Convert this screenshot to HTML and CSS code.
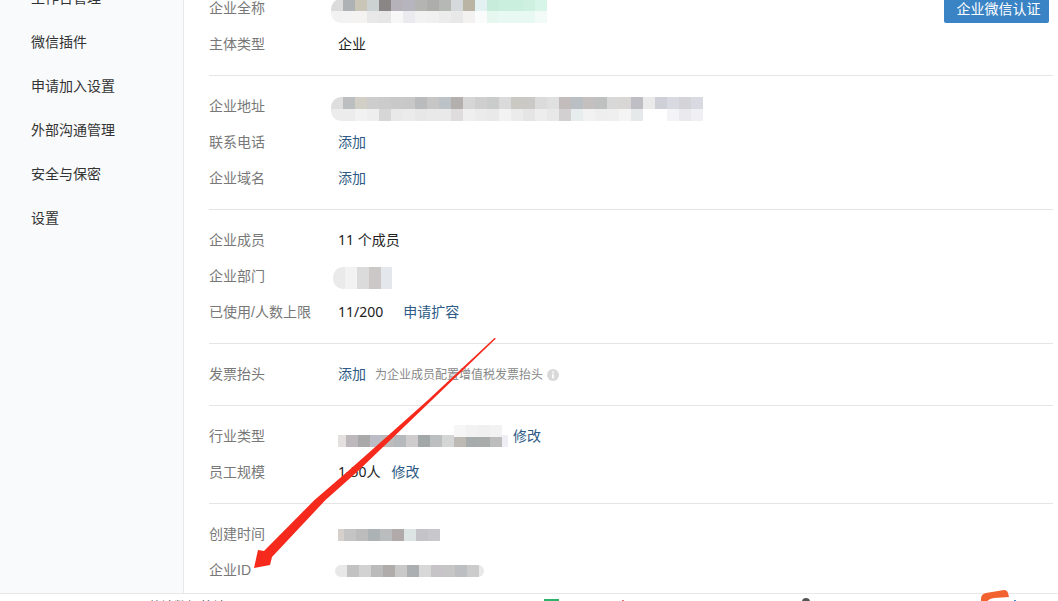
FILE: index.html
```html
<!DOCTYPE html>
<html lang="zh-CN">
<head>
<meta charset="utf-8">
<title>企业信息</title>
<link rel="stylesheet" href="styles.css">
</head>
<body>
<div class="page">
  <div class="app">
    <nav class="sidebar">
      <a class="nav-item">工作台管理</a>
      <a class="nav-item">微信插件</a>
      <a class="nav-item">申请加入设置</a>
      <a class="nav-item">外部沟通管理</a>
      <a class="nav-item">安全与保密</a>
      <a class="nav-item">设置</a>
    </nav>
    <main class="main">
      <section class="section section-head">
        <div class="rows">
          <div class="row"><span class="label">企业全称</span>
            <svg class="mosaic m-name" viewBox="0 0 216 24" width="216" height="24">
              <rect x="0" y="0" fill="#dcdcdc"/><rect x="12" y="0" fill="#aeb2b4"/><rect x="24" y="0" fill="#c9c6b8"/><rect x="36" y="0" fill="#ccd2d2"/><rect x="48" y="0" fill="#8a8686"/><rect x="60" y="0" fill="#b5b2ba"/><rect x="72" y="0" fill="#b6b4bd"/><rect x="84" y="0" fill="#b4b5b2"/><rect x="96" y="0" fill="#adaeac"/><rect x="108" y="0" fill="#b6b8b6"/><rect x="120" y="0" fill="#d6d9dc"/><rect x="132" y="0" fill="#b9b4a4"/><rect x="144" y="0" fill="#e4f1f2"/><rect x="156" y="0" fill="#c8ecdc"/><rect x="168" y="0" fill="#cbefde"/><rect x="180" y="0" fill="#cbefde"/><rect x="192" y="0" fill="#cdf0e0"/><rect x="204" y="0" fill="#d8f5ea"/>
              <rect x="0" y="12" fill="#f2f2f2"/><rect x="12" y="12" fill="#f3f3f3"/><rect x="24" y="12" fill="#f4f3f2"/><rect x="36" y="12" fill="#e8e8e8"/><rect x="48" y="12" fill="#e6e6e6"/><rect x="60" y="12" fill="#f7f7f7"/><rect x="72" y="12" fill="#ebebef"/><rect x="84" y="12" fill="#f2f2f2"/><rect x="96" y="12" fill="#f0f0f0"/><rect x="108" y="12" fill="#ececec"/><rect x="120" y="12" fill="#e8e8e8"/><rect x="132" y="12" fill="#f4f2f0"/><rect x="144" y="12" fill="#fafcfc"/><rect x="156" y="12" fill="#e6f7f0"/><rect x="168" y="12" fill="#e8f8f2"/><rect x="180" y="12" fill="#e8f8f2"/><rect x="192" y="12" fill="#e8f8f2"/><rect x="204" y="12" fill="#f2fbf8"/>
            </svg>
          </div>
          <div class="row"><span class="label">主体类型</span><span class="value">企业</span></div>
        </div>
        <button class="verify" type="button">企业微信认证</button>
      </section>

      <section class="section">
        <div class="row"><span class="label">企业地址</span>
          <svg class="mosaic m-addr" viewBox="0 0 373 24" width="373" height="24">
            <rect x="0" y="0" fill="#dedede"/><rect x="12" y="0" fill="#bcbfc0"/><rect x="24" y="0" fill="#d2cfc6"/><rect x="36" y="0" fill="#cdcdcd"/><rect x="48" y="0" fill="#cbcbcb"/><rect x="60" y="0" fill="#c9c9c9"/><rect x="72" y="0" fill="#c8c8c8"/><rect x="84" y="0" fill="#b9bbbc"/><rect x="96" y="0" fill="#c6c6c6"/><rect x="108" y="0" fill="#bcc2c6"/><rect x="120" y="0" fill="#b3afac"/><rect x="132" y="0" fill="#d6d6d6"/><rect x="144" y="0" fill="#cfcfcf"/><rect x="156" y="0" fill="#c9ccca"/><rect x="168" y="0" fill="#dadada"/><rect x="180" y="0" fill="#cbc9c4"/><rect x="192" y="0" fill="#cbc9c6"/><rect x="204" y="0" fill="#dbdbdb"/><rect x="216" y="0" fill="#e0e0e0"/><rect x="228" y="0" fill="#c2bcbc"/><rect x="240" y="0" fill="#b9bfc2"/><rect x="252" y="0" fill="#c3c0bf"/><rect x="264" y="0" fill="#bfc0c0"/><rect x="276" y="0" fill="#d8d8d8"/><rect x="288" y="0" fill="#d9d6d6"/><rect x="300" y="0" fill="#bebec4"/><rect x="312" y="0" fill="#eaeaea"/><rect x="324" y="0" fill="#cfcfd8"/><rect x="336" y="0" fill="#d9d9e2"/><rect x="348" y="0" fill="#d4d4d8"/><rect x="360" y="0" fill="#d9d9e2"/>
            <rect x="0" y="12" fill="#ececec"/><rect x="12" y="12" fill="#ececec"/><rect x="24" y="12" fill="#f2f2f2"/><rect x="36" y="12" fill="#eeeeee"/><rect x="48" y="12" fill="#d6d6d6"/><rect x="60" y="12" fill="#e9e9e9"/><rect x="72" y="12" fill="#ebebeb"/><rect x="84" y="12" fill="#e7e7e7"/><rect x="96" y="12" fill="#e9e9e9"/><rect x="108" y="12" fill="#e9e9e9"/><rect x="120" y="12" fill="#dedcdc"/><rect x="132" y="12" fill="#efefef"/><rect x="144" y="12" fill="#ebebeb"/><rect x="156" y="12" fill="#e9e9e9"/><rect x="168" y="12" fill="#f2f2f2"/><rect x="180" y="12" fill="#ebebeb"/><rect x="192" y="12" fill="#e5e5e5"/><rect x="204" y="12" fill="#ededed"/><rect x="216" y="12" fill="#e8e8e8"/><rect x="228" y="12" fill="#d2d0d0"/><rect x="240" y="12" fill="#e7ecec"/><rect x="252" y="12" fill="#f2f2f2"/><rect x="264" y="12" fill="#eeeeee"/><rect x="276" y="12" fill="#efefef"/><rect x="288" y="12" fill="#f4f4f4"/><rect x="300" y="12" fill="#e6e9ea"/><rect x="312" y="12" fill="#ffffff"/><rect x="324" y="12" fill="#ffffff"/><rect x="336" y="12" fill="#f4f4f6"/><rect x="348" y="12" fill="#e9e9ee"/><rect x="360" y="12" fill="#f0f0f4"/>
          </svg>
        </div>
        <div class="row"><span class="label">联系电话</span><a class="link">添加</a></div>
        <div class="row"><span class="label">企业域名</span><a class="link">添加</a></div>
      </section>

      <section class="section">
        <div class="row"><span class="label">企业成员</span><span class="value">11 个成员</span></div>
        <div class="row"><span class="label">企业部门</span>
          <svg class="mosaic m-dept" viewBox="0 0 59 22" width="59" height="22">
            <rect x="0" y="0" fill="#eaeaea"/><rect x="12" y="0" fill="#f2f2f2"/><rect x="24" y="0" fill="#dbdbdb"/><rect x="36" y="0" fill="#cdc8c8"/><rect x="48" y="0" fill="#e4e8ec"/>
            <rect x="0" y="12" fill="#eaeaea"/><rect x="12" y="12" fill="#f2f2f2"/><rect x="24" y="12" fill="#dbdbdb"/><rect x="36" y="12" fill="#cdc8c8"/><rect x="48" y="12" fill="#e4e8ec"/>
          </svg>
        </div>
        <div class="row"><span class="label">已使用/人数上限</span><span class="value">11/200</span><a class="link link-gap">申请扩容</a></div>
      </section>

      <section class="section">
        <div class="row"><span class="label">发票抬头</span><a class="link">添加</a><span class="hint">为企业成员配置增值税发票抬头</span>
          <svg class="info" viewBox="0 0 12 12" width="12" height="12"><circle cx="6" cy="6" r="6" fill="#d9d9d9"/><rect x="5.2" y="5" width="1.6" height="4.4" fill="#fff"/><rect x="5.2" y="2.6" width="1.6" height="1.5" fill="#fff"/></svg>
        </div>
      </section>

      <section class="section">
        <div class="row"><span class="label">行业类型</span>
          <svg class="mosaic m-ind" viewBox="0 0 170 22" width="170" height="22">
            <rect x="0" y="10" fill="#e4e0e0"/><rect x="8" y="10" fill="#bcb8bc"/><rect x="20" y="10" fill="#a9a9aa"/><rect x="32" y="10" fill="#bcbcc6"/><rect x="44" y="10" fill="#bcbcbc"/><rect x="56" y="10" fill="#b5b9bb"/><rect x="68" y="10" fill="#cfcccd"/><rect x="80" y="10" fill="#a2a8a8"/><rect x="92" y="10" fill="#bcbfbf"/><rect x="104" y="10" fill="#d4d6d6"/><rect x="116" y="10" fill="#bdbab5"/><rect x="128" y="10" fill="#a6acac"/><rect x="140" y="10" fill="#a8acaa"/><rect x="152" y="10" fill="#bdbdbd"/><rect x="164" y="10" fill="#eeeef4"/>
            <rect x="116" y="0" fill="#f6f6f6"/><rect x="128" y="0" fill="#f2f2f2"/><rect x="140" y="0" fill="#f0f0f0"/><rect x="152" y="0" fill="#f2f2f2"/>
          </svg>
          <a class="link link-edit">修改</a>
        </div>
        <div class="row"><span class="label">员工规模</span><span class="value">1-50人</span><a class="link link-near">修改</a></div>
      </section>

      <section class="section section-last">
        <div class="row"><span class="label">创建时间</span>
          <svg class="mosaic m-time" viewBox="0 0 102 12" width="102" height="12">
            <rect x="0" y="0" fill="#d5d0cc"/><rect x="6" y="0" fill="#c4c4c4"/><rect x="18" y="0" fill="#bcbcbc"/><rect x="30" y="0" fill="#adb2b4"/><rect x="42" y="0" fill="#b9bdbd"/><rect x="54" y="0" fill="#b0aaaa"/><rect x="66" y="0" fill="#dce4e4"/><rect x="78" y="0" fill="#c4c4c8"/><rect x="90" y="0" fill="#c8c8cc"/>
          </svg>
        </div>
        <div class="row"><span class="label">企业ID</span>
          <svg class="mosaic m-id" viewBox="0 0 149 12" width="149" height="12">
            <rect x="0" y="0" fill="#e8e8e8"/><rect x="12" y="0" fill="#c2c2c2"/><rect x="24" y="0" fill="#d2d2d2"/><rect x="36" y="0" fill="#bbbbbb"/><rect x="48" y="0" fill="#b0acac"/><rect x="60" y="0" fill="#c9c9c9"/><rect x="72" y="0" fill="#abafb2"/><rect x="84" y="0" fill="#d8d8d8"/><rect x="96" y="0" fill="#c7c4c7"/><rect x="108" y="0" fill="#c6c6c6"/><rect x="120" y="0" fill="#bcbec2"/><rect x="132" y="0" fill="#cbcbcb"/><rect x="144" y="0" fill="#e8e8e8"/>
          </svg>
        </div>
      </section>
    </main>
  </div>

  <footer class="bottom">
    <span class="bottom-text">共计数据统计</span>
    <span class="chip-green"></span>
    <span class="chip-red"></span>
    <span class="chip-dark"></span>
    <span class="chip-blue"></span>
  </footer>

  <svg class="arrow" viewBox="0 0 1058 601" width="1058" height="601" aria-hidden="true">
    <polygon fill="#f5291c" points="494.5,338 496,338.5 432,400 393.5,437 357,472 325.5,500 272,557 270,565 254,568 258,550 264,551 314.5,500 347,472 386.5,437 428,400"/>
  </svg>
  <svg class="logo" viewBox="0 0 32 14" width="32" height="14" aria-hidden="true">
    <path d="M1 9 Q1 4 6 3 L24 0 Q27 0 28 3 L29 7 L14 8 Q7 9 6 14 L1 14 Z" fill="#f2622e"/>
  </svg>
</div>
</body>
</html>
```
FILE: styles.css
```css
* { box-sizing: border-box; }
html, body { margin: 0; height: 100%; overflow: hidden; background: #fff; }
body { font: 14px/1.4 "Liberation Sans", "Noto Sans CJK SC", sans-serif; color: #333; }

.page { position: relative; width: 1058px; height: 601px; overflow: hidden; display: flex; flex-direction: column; }
.app { display: flex; height: 594px; overflow: hidden; flex: none; border-bottom: 1px solid #e8e8e8; }

.sidebar { width: 184px; flex: none; background: #f9fafc; border-right: 1px solid #e9e9e9; margin-top: -24px; display: flex; flex-direction: column; }
.nav-item { height: 44px; line-height: 44px; padding-left: 31px; color: #333; flex: none; }

.main { flex: 1; min-width: 0; margin-top: -22px; padding: 0 5px 0 25px; }
.section { padding: 12px 0 13px; border-bottom: 1px solid #e5e5e5; flex: none; }
.section-head { display: flex; justify-content: space-between; align-items: flex-start; }
.section-last { border-bottom: 0; }
.rows { flex: 1; }
.row { height: 36px; padding-top: 2px; display: flex; align-items: center; }
.label { width: 129px; flex: none; color: #787878; }
.value { color: #222; margin-top: -2px; font-family: "Noto Sans", "Noto Sans CJK SC", sans-serif; }
.link { color: #2d5b85; }
.link-gap { margin-left: 20px; }
.link-near { margin-left: 11px; }
.link-edit { margin-left: 5px; }
.hint { margin-left: 9px; font-size: 12px; color: #888; }
.info { margin-left: 4px; flex: none; }

.verify { width: 105px; height: 32px; margin: 1px 4px 0 0; padding: 5px 0 0 4px; border: 0; border-radius: 2px; background: #3a84c5; color: #fff; font: inherit; }

.mosaic { display: block; flex: none; shape-rendering: crispEdges; }
.mosaic rect { width: 12px; height: 12px; }
.m-name { margin: 3px 0 0 -7px; border-radius: 10px 0 0 10px; }
.m-addr { margin: 3px 0 0 -7px; border-radius: 10px 0 0 10px; }
.m-dept { margin: 1px 0 0 -5px; border-radius: 10px 0 0 10px; }
.m-ind { margin: -2px 0 0 0; }
.m-time { margin: -1px 0 0; }
.m-id { margin: -1px 0 0 -3px; border-radius: 6px; }

.bottom { flex: 1; position: relative; overflow: hidden; font-size: 13px; color: #444; display: flex; align-items: flex-start; }
.bottom-text { margin: 0 0 0 148px; padding-top: 4px; }
.chip-green { width: 15px; height: 8px; margin: 5px 0 0 318px; background: #2fb36a; }
.chip-red { width: 2px; height: 8px; margin: 6px 0 0 63px; background: #e9716b; }
.chip-dark { width: 8px; height: 8px; margin: 4px 0 0 178px; border-radius: 50%; background: #555; }
.chip-blue { width: 2px; height: 8px; margin: 6px 0 0 204px; background: #3a8ed0; }

.arrow { position: absolute; left: 0; top: 0; pointer-events: none; }
.logo { position: absolute; left: 980px; top: 590px; }
```
